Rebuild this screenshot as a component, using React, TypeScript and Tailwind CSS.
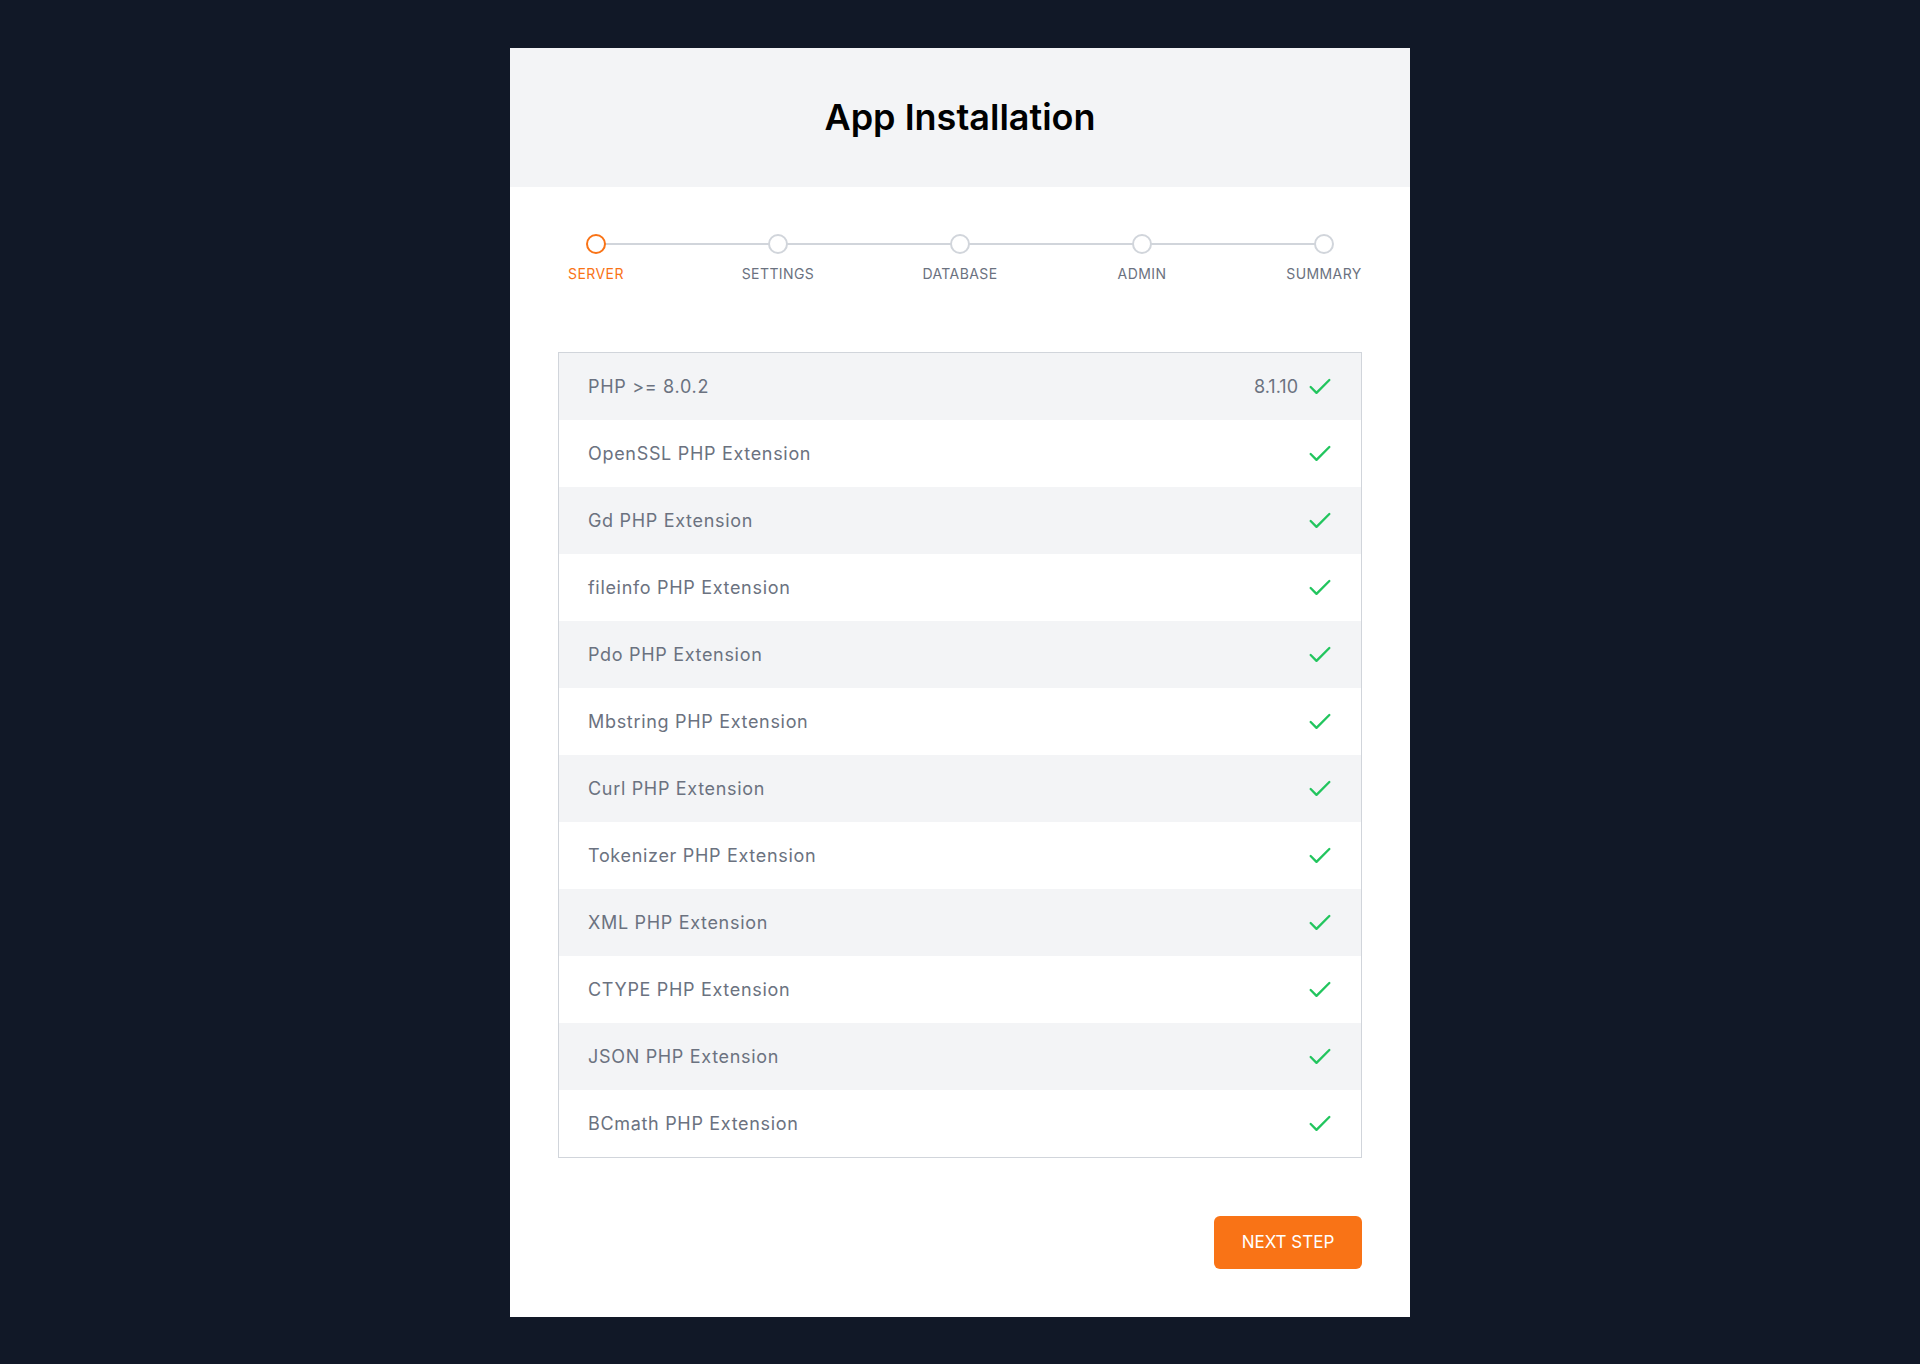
import React from "react";
import { Check } from "lucide-react";

const steps = ["SERVER", "SETTINGS", "DATABASE", "ADMIN", "SUMMARY"];

const rows: { name: string; value?: string }[] = [
  { name: "PHP >= 8.0.2", value: "8.1.10" },
  { name: "OpenSSL PHP Extension" },
  { name: "Gd PHP Extension" },
  { name: "fileinfo PHP Extension" },
  { name: "Pdo PHP Extension" },
  { name: "Mbstring PHP Extension" },
  { name: "Curl PHP Extension" },
  { name: "Tokenizer PHP Extension" },
  { name: "XML PHP Extension" },
  { name: "CTYPE PHP Extension" },
  { name: "JSON PHP Extension" },
  { name: "BCmath PHP Extension" },
];

export default function App() {
  return (
    <div
      className="min-h-[1364px] w-full bg-[#111827] pt-12 pb-12"
      style={{ fontFamily: "Inter, 'Noto Sans', sans-serif" }}
    >
      <div className="mx-auto w-[900px] bg-white">
        <div className="flex h-[139px] items-center justify-center bg-[#f3f4f6] pb-[2px]">
          <h1 className="text-[36px] font-semibold leading-none text-black">App Installation</h1>
        </div>
        <div className="px-12 pt-[47px] pb-12">
          <div className="relative flex justify-between">
            <div className="absolute left-[38px] right-[38px] top-[9px] h-[2px] bg-[#d1d5db]" />
            {steps.map((s, i) => (
              <div key={s} className="relative flex w-[76px] flex-col items-center">
                <div
                  className={
                    i === 0
                      ? "h-5 w-5 rounded-full border-2 border-[#f97316] bg-white"
                      : "h-5 w-5 rounded-full border-2 border-[#d1d5db] bg-white"
                  }
                />
                <div
                  className={
                    i === 0
                      ? "mt-[10px] whitespace-nowrap text-[14px] leading-5 tracking-[0.03em] text-[#f97316]"
                      : "mt-[10px] whitespace-nowrap text-[14px] leading-5 tracking-[0.03em] text-[#6b7280]"
                  }
                >
                  {s}
                </div>
              </div>
            ))}
          </div>
          <div className="mt-[68px] border border-[#d1d5db]">
            {rows.map((r, i) => (
              <div
                key={r.name}
                className={
                  i % 2 === 0
                    ? "flex h-[67px] items-center justify-between bg-[#f3f4f6] pl-7 pr-[27px]"
                    : "flex h-[67px] items-center justify-between bg-white pl-7 pr-[27px]"
                }
              >
                <span className="pl-px text-[18px] tracking-[0.038em] text-[#6b7280]">{r.name}</span>
                <span className="flex items-center gap-[8px]">
                  {r.value && <span className="text-[18px] text-[#6b7280]">{r.value}</span>}
                  <Check size={28} strokeWidth={2} className="text-[#22c55e]" />
                </span>
              </div>
            ))}
          </div>
          <div className="mt-[58px] flex justify-end">
            <button className="flex h-[53px] w-[148px] items-center justify-center rounded-md bg-[#f97316] text-[17px] text-white">
              NEXT STEP
            </button>
          </div>
        </div>
      </div>
    </div>
  );
}
